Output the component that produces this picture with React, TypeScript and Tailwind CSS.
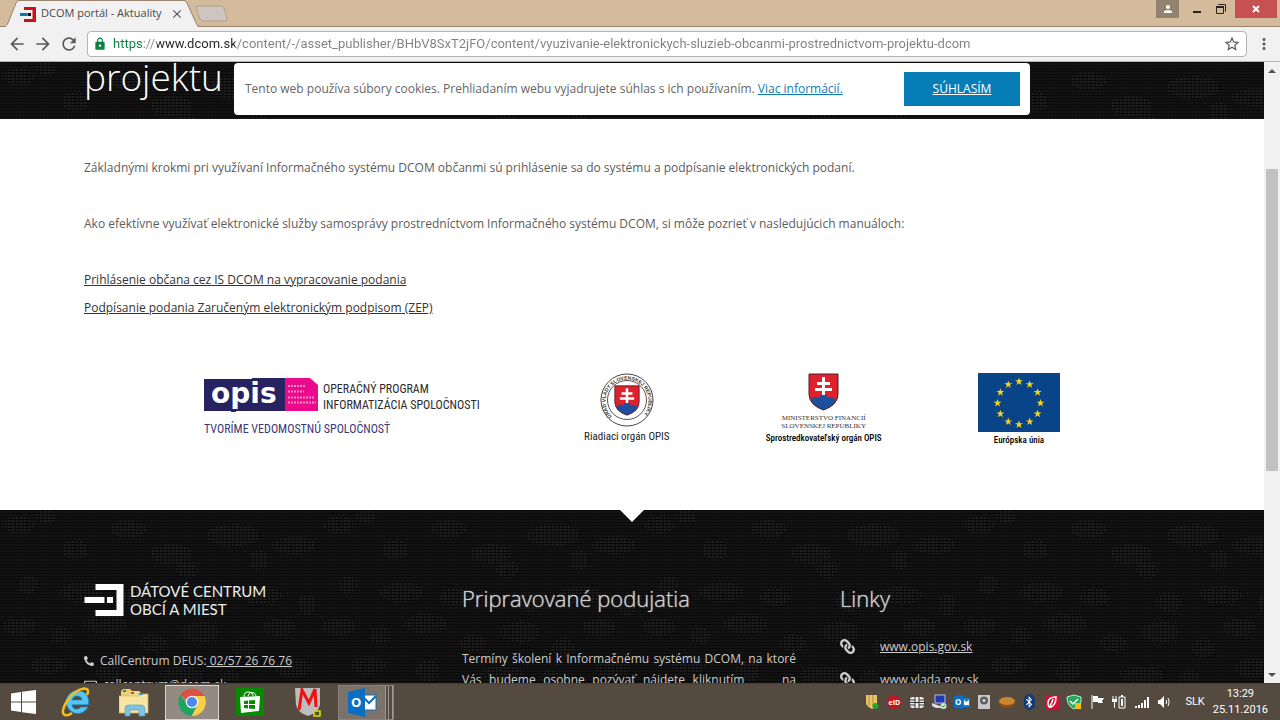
import type { ReactNode } from 'react';
import { FaBluetoothB, FaLink, FaPhone, FaRegEnvelope } from 'react-icons/fa';
import {
  MdArrowBack,
  MdArrowForward,
  MdClose,
  MdLock,
  MdMoreVert,
  MdPerson,
  MdRefresh,
  MdStarBorder,
} from 'react-icons/md';

const PAGE_URL =
  'https://www.dcom.sk/content/-/asset_publisher/BHbV8SxT2jFO/content/vyuzivanie-elektronickych-sluzieb-obcanmi-prostrednictvom-projektu-dcom';

// Lighter woven spots of the dark background: x, y, width, height
const PATCHES = [
  [4, 6, 30, 18], [36, 0, 20, 14], [62, 30, 26, 20], [110, 10, 36, 18], [150, 34, 42, 20],
  [176, 50, 22, 18], [206, 14, 54, 22], [250, 40, 18, 20], [272, 26, 44, 18], [18, 66, 20, 18],
  [60, 72, 44, 20], [120, 78, 30, 18], [196, 82, 26, 20], [240, 76, 42, 18], [298, 84, 18, 22],
  [2, 108, 34, 18], [50, 116, 20, 18], [84, 104, 44, 20], [140, 124, 26, 18], [180, 112, 40, 20],
  [232, 128, 22, 20], [262, 108, 34, 18], [30, 146, 36, 18], [96, 150, 24, 22], [160, 156, 44, 18],
  [220, 160, 20, 16], [276, 148, 34, 20],
];

function Weave({ id }: { id: string }) {
  return (
    <svg className="absolute inset-0 h-full w-full" aria-hidden="true">
      <defs>
        <pattern id={`${id}-grid`} width="3" height="3" patternUnits="userSpaceOnUse">
          <rect width="3" height="3" fill="#141414" />
          <rect width="1" height="3" fill="#101010" />
          <rect width="3" height="1" fill="#090909" />
        </pattern>
        <pattern id={`${id}-lines`} width="4" height="3" patternUnits="userSpaceOnUse">
          <rect y="1" width="2" height="2" fill="#1e1e1e" />
        </pattern>
        <pattern id={`${id}-spots`} width="320" height="176" patternUnits="userSpaceOnUse">
          {PATCHES.map(([x, y, w, h]) => (
            <ellipse
              key={`${x}-${y}`}
              cx={x + w / 2}
              cy={y + h / 2}
              rx={w / 2}
              ry={h / 2}
              fill={`url(#${id}-lines)`}
            />
          ))}
        </pattern>
      </defs>
      <rect width="100%" height="100%" fill={`url(#${id}-grid)`} />
      <rect width="100%" height="100%" fill={`url(#${id}-spots)`} />
    </svg>
  );
}

function DcomMark({ className }: { className: string }) {
  return (
    <svg viewBox="0 0 39 32" className={className} fill="#ffffff" aria-hidden="true">
      <path d="M11 0H39V32H11V26H32V6H11Z" />
      <path d="M0 13H20V19H0Z" />
      <path d="M22.500 13H28.500V19H22.500Z" />
    </svg>
  );
}

function BrowserChrome() {
  return (
    <header className="shrink-0 font-['Open_Sans',sans-serif]">
      <div className="flex h-[27px] border-b border-[#98846f] bg-[#d3bb9c]">
        <div className="relative h-[27px] w-[200px] shrink-0">
          <svg viewBox="0 0 200 27" className="absolute inset-0 h-full w-full" aria-hidden="true">
            <path d="M0 26.500H5Q7 26 8 23L16 3Q17 0.500 19 0.500H184Q186 0.500 187 3L196 23Q197 26.500 200 26.500V27H0Z" fill="#f1f1f1" stroke="#98846f" />
            <path d="M6 26.500H197" stroke="#f1f1f1" strokeWidth="2" />
          </svg>
          <div className="relative flex h-full items-center pl-5">
            <svg viewBox="0 0 16 16" className="h-4 w-4 shrink-0" aria-hidden="true">
              <path d="M4 1H16V16H4V13H12.500V4H4Z" fill="#cf1017" />
              <path d="M0 7H7V10H0Z" fill="#1273a8" />
              <path d="M7.500 7H11V10H7.500Z" fill="#111111" />
            </svg>
            <span className="ml-[5px] text-[11px] whitespace-nowrap text-[#4a4a4a]">DCOM portál - Aktuality</span>
            <button aria-label="Zavrieť kartu" className="mr-4 ml-auto text-[#555555]">
              <MdClose className="h-[14px] w-[14px]" />
            </button>
          </div>
        </div>
        <button aria-label="Nová karta" className="h-[22px] w-8 self-end">
          <svg viewBox="0 0 32 22" className="h-full w-full overflow-visible" aria-hidden="true">
            <path d="M-2 2H20Q23 2 24 4L27 14Q28 17 25 17H3Q1 17 0 15L-4 4Q-4 2 -2 2Z" fill="#cdc6c0" stroke="#b3a08c" />
          </svg>
        </button>
        <div className="ml-auto flex h-[18px] pr-[3px]">
          <button aria-label="Profil" className="flex w-[23px] items-center justify-center bg-[#938270] text-white">
            <MdPerson className="h-3 w-3" />
          </button>
          <button aria-label="Minimalizovať" className="flex w-[28px] items-end justify-center pb-[5px] pl-2">
            <span className="h-[2px] w-2 bg-[#222222]" />
          </button>
          <button aria-label="Obnoviť" className="flex w-[28px] items-center justify-center">
            <svg viewBox="0 0 12 12" className="h-3 w-3" fill="none" stroke="#2b2520" aria-hidden="true">
              <path d="M3.500 2V1.500H10.500V8.500H10" />
              <path d="M1.500 4.500H8.500V10.500H1.500Z" />
              <path d="M1 4H9" strokeWidth="2" />
            </svg>
          </button>
          <button aria-label="Zavrieť" className="flex w-[42px] items-center justify-center bg-[#c75050] text-white">
            <svg viewBox="0 0 8 8" className="h-2 w-2" aria-hidden="true">
              <path d="M1 1L7 7M7 1L1 7" stroke="#ffffff" strokeWidth="2" />
            </svg>
          </button>
        </div>
      </div>
      <div className="flex h-[35px] items-center border-b border-[#b6b4b6] bg-[#f1f1f1] px-[7px] text-[#5a5a5a]">
        <button aria-label="Späť" className="mr-[6px]"><MdArrowBack className="h-5 w-5" /></button>
        <button aria-label="Dopredu" className="mr-[6px]"><MdArrowForward className="h-5 w-5" /></button>
        <button aria-label="Obnoviť stránku" className="mr-2"><MdRefresh className="h-5 w-5" /></button>
        <div className="flex h-[26px] min-w-0 flex-1 items-center rounded-sm border border-[#b4b4b4] bg-white px-[5px]">
          <MdLock className="h-[14px] w-[14px] shrink-0 text-[#0b8043]" />
          <input
            type="text"
            aria-label="Adresa"
            defaultValue={PAGE_URL}
            className="ml-[6px] min-w-0 flex-1 bg-[linear-gradient(90deg,#0b8043_0_31px,#8a8a8a_31px_44px,#222222_44px_122px,#808080_122px)] bg-clip-text font-['Roboto',sans-serif] text-[13px] text-transparent outline-none"
          />
          <button aria-label="Pridať záložku"><MdStarBorder className="h-[18px] w-[18px]" /></button>
        </div>
        <button aria-label="Ponuka" className="ml-2"><MdMoreVert className="h-[18px] w-[18px]" /></button>
      </div>
    </header>
  );
}

function Shield({ x, y, w, h }: { x: number; y: number; w: number; h: number }) {
  return (
    <svg x={x} y={y} width={w} height={h} viewBox="0 0 31 38" preserveAspectRatio="none">
      <path d="M1 1H30V21Q30 32 15.500 37Q1 32 1 21Z" fill="#e0202b" />
      <path d="M3 28Q3 24 7 24Q10 24 11 25Q12 21 15.500 21Q19 21 20 25Q24 23 27 26Q28 27 28 28Q24 34 15.500 37Q7 34 3 28Z" fill="#1d4f9f" />
      <path d="M14 4H17V9H22V12H17V15H24V18H17V22H14V18H7V15H14V12H9V9H14Z" fill="#ffffff" />
      <path d="M1 1H30V21Q30 32 15.500 37Q1 32 1 21Z" fill="none" stroke="#4a2030" />
    </svg>
  );
}

function OpisLogo() {
  return (
    <div className="w-[283px] pt-1">
      <div className="flex items-center">
        <svg viewBox="0 0 114 34" className="h-[34px] w-[114px] shrink-0 overflow-visible" role="img" aria-label="opis">
          <path d="M0 1H48V0H81V33H32V34H27V33H0Z" fill="#272361" />
          <path d="M81 0H106L114 7V33H81Z" fill="#ec0a8c" />
          <text x="7" y="25" fontSize="28" fontWeight="700" fill="#ffffff" fontFamily="DejaVu Sans">opis</text>
          <path d="M84 8H102M84 13.500H100M84 19.500H110M84 24.500H112" stroke="#f68ac6" strokeWidth="2" strokeDasharray="2 1" />
        </svg>
        <p className="ml-[5px] pt-1 font-['Liberation_Sans_Narrow','Roboto_Condensed',sans-serif] text-[12px] leading-4 whitespace-nowrap text-[#2b2b2b]">
          OPERAČNÝ PROGRAM
          <br />
          INFORMATIZÁCIA SPOLOČNOSTI
        </p>
      </div>
      <p className="mt-2 font-['Liberation_Sans_Narrow','Roboto_Condensed',sans-serif] text-[12px] leading-4 whitespace-nowrap text-[#3c3878]">
        TVORÍME VEDOMOSTNÚ SPOLOČNOSŤ
      </p>
    </div>
  );
}

const STARS = Array.from({ length: 12 }, (_, i) => {
  const a = (i * Math.PI) / 6;
  return { x: 41 + 21.500 * Math.sin(a), y: 30 - 21.500 * Math.cos(a) };
});

function Partners() {
  return (
    <div className="flex h-[75px] justify-between px-[120px] font-['Liberation_Sans_Narrow','Roboto_Condensed',sans-serif] text-[#222222]">
      <OpisLogo />
      <div className="flex w-[85px] flex-col items-center">
        <svg viewBox="0 0 56 54" className="h-[54px] w-14 shrink-0 overflow-visible" role="img" aria-label="Úrad vlády">
          <defs>
            <path id="seal-ring" d="M13 43.500A21.500 21.500 0 1 1 43 43.500" />
          </defs>
          <circle cx="28" cy="27" r="26" fill="#ffffff" stroke="#444444" />
          <circle cx="28" cy="27" r="19.500" fill="none" stroke="#555555" />
          <text fontSize="5" fontWeight="700" fill="#333333" fontFamily="Liberation Sans">
            <textPath href="#seal-ring">ÚRAD VLÁDY SLOVENSKEJ REPUBLIKY</textPath>
          </text>
          <Shield x={15} y={12} w={26} h={31} />
        </svg>
        <span className="mt-[2px] text-[11px] leading-4 whitespace-nowrap">Riadiaci orgán OPIS</span>
      </div>
      <div className="flex w-[114px] flex-col items-center">
        <svg viewBox="0 0 31 38" className="h-[38px] w-[31px] shrink-0" role="img" aria-label="Štátny znak">
          <Shield x={0} y={0} w={31} h={38} />
        </svg>
        <p className="mt-[3px] text-center font-['Liberation_Serif',serif] text-[7px] leading-[8px] whitespace-nowrap text-[#333333]">
          MINISTERSTVO FINANCIÍ
          <br />
          SLOVENSKEJ REPUBLIKY
        </p>
        <span className="text-[9px] leading-4 font-medium whitespace-nowrap text-black">
          Sprostredkovateľský orgán OPIS
        </span>
      </div>
      <div className="flex w-[82px] flex-col items-center">
        <svg viewBox="0 0 82 59" className="h-[59px] w-[82px] shrink-0" role="img" aria-label="Vlajka EÚ">
          <rect width="82" height="59" fill="#094489" />
          {STARS.map((s) => (
            <path
              key={`${s.x}-${s.y}`}
              transform={`translate(${s.x} ${s.y})`}
              d="M0-4L1-1.200H4L1.500 0.500L2.500 3.500L0 1.700L-2.500 3.500L-1.500 0.500L-4-1.200H-1Z"
              fill="#f7d51d"
            />
          ))}
        </svg>
        <span className="text-[9px] leading-4 font-medium whitespace-nowrap text-black">Európska únia</span>
      </div>
    </div>
  );
}

function SiteFooter() {
  const heading = 'text-[22px] font-light leading-[30px] text-[#cccccc] [text-shadow:0_0_1px_#cccccc]';
  return (
    <footer className="relative min-h-0 flex-1 overflow-hidden bg-[#111111] px-[84px] pt-[73px] text-[#cccccc]">
      <Weave id="footer" />
      <svg viewBox="0 0 24 12" className="absolute top-0 left-1/2 h-3 w-6 -translate-x-1/2" aria-hidden="true">
        <path d="M0 0H24L12 12Z" fill="#ffffff" />
      </svg>
      <div className="relative grid max-w-[1090px] grid-cols-3 gap-[44px]">
        <div>
          <div className="flex h-[34px] items-center">
            <DcomMark className="h-8 w-10" />
            <p className="ml-[6px] font-['Lato',sans-serif] text-[15px] leading-[18px] whitespace-nowrap text-[#eeeeee]">
              DÁTOVÉ CENTRUM
              <br />
              OBCÍ A MIEST
            </p>
          </div>
          <ul className="mt-8 leading-6">
            <li className="flex items-center">
              <FaPhone className="mr-[6px] h-[10px] w-[10px] -scale-x-100" />
              <span>
                CallCentrum DEUS:<a href="tel:0257267676" className="underline"> 02/57 26 76 76</a>
              </span>
            </li>
            <li className="flex items-center">
              <FaRegEnvelope className="mr-[6px] h-[13px] w-[13px]" />
              <a href="mailto:callcentrum@dcom.sk">callcentrum@dcom.sk</a>
            </li>
          </ul>
        </div>
        <div>
          <h2 className={heading}>Pripravované podujatia</h2>
          <p className="mt-[35px] text-justify leading-[21px] [text-align-last:justify]">
            Termíny školení k Informačnému systému DCOM, na ktoré Vás budeme osobne pozývať nájdete kliknutím &nbsp; &nbsp; na
          </p>
        </div>
        <div>
          <h2 className={heading}>Linky</h2>
          <ul className="mt-[17px] leading-[33px]">
            {['www.opis.gov.sk', 'www.vlada.gov.sk'].map((site) => (
              <li key={site} className="flex items-center">
                <FaLink className="mr-[25px] h-[15px] w-[15px] -scale-x-100" />
                <a href={`http://${site}`} className="underline">{site}</a>
              </li>
            ))}
          </ul>
        </div>
      </div>
    </footer>
  );
}

function Page() {
  return (
    <main className="relative flex min-w-0 flex-1 flex-col overflow-hidden bg-white font-['Open_Sans',sans-serif] text-[12px]">
      <div className="relative flex h-[57px] shrink-0 items-end bg-[#111111] px-[84px]">
        <Weave id="hero" />
        <h1 className="relative pb-6 text-[37px] leading-none font-light text-white">projektu</h1>
      </div>
      <div
        role="dialog"
        aria-label="Cookies"
        className="absolute top-px left-1/2 flex h-[52px] w-[796px] -translate-x-1/2 items-center justify-between rounded bg-white pr-[10px] pl-[11px] text-[#666666]"
      >
        <p>
          Tento web používa súbory cookies. Prehliadaním webu vyjadrujete súhlas s ich používaním.{' '}
          <a href="#info" className="text-[#0f7bb5] underline">Viac informácií.</a>
        </p>
        <button className="h-[34px] w-[116px] bg-[#067db7] text-white underline">SÚHLASÍM</button>
      </div>
      <article className="shrink-0 px-[84px] pt-[35px] pb-[62px] leading-7 text-[#5c5c5c]">
        <p>
          Základnými krokmi pri využívaní Informačného systému DCOM občanmi sú prihlásenie sa do systému a podpísanie
          elektronických podaní.
        </p>
        <p className="mt-7">
          Ako efektívne využívať elektronické služby samosprávy prostredníctvom Informačného systému DCOM, si môže pozrieť
          v nasledujúcich manuáloch:
        </p>
        <ul className="mt-7 mb-[51px] text-[#333333]">
          <li><a href="#prihlasenie" className="underline">Prihlásenie občana cez IS DCOM na vypracovanie podania</a></li>
          <li><a href="#podpisanie" className="underline">Podpísanie podania Zaručeným elektronickým podpisom (ZEP)</a></li>
        </ul>
        <Partners />
      </article>
      <SiteFooter />
    </main>
  );
}

function Scrollbar() {
  return (
    <div className="flex w-4 shrink-0 flex-col bg-[#f1f1f1]">
      <button aria-label="Nahor" className="flex h-[17px] items-center justify-center">
        <svg viewBox="0 0 8 4" className="h-1 w-2" aria-hidden="true"><path d="M0 4L4 0L8 4Z" fill="#505050" /></svg>
      </button>
      <div className="min-h-0 flex-1 px-[2px] pt-[90px]">
        <div className="h-[302px] bg-[#c1c1c1]" />
      </div>
      <button aria-label="Nadol" className="flex h-[17px] items-center justify-center">
        <svg viewBox="0 0 8 4" className="h-1 w-2" aria-hidden="true"><path d="M0 0L4 4L8 0Z" fill="#505050" /></svg>
      </button>
    </div>
  );
}

function TaskButton({ label, children }: { label: string; children: ReactNode }) {
  return (
    <button aria-label={label} className="flex h-full w-[58px] items-center justify-center">
      {children}
    </button>
  );
}

function TrayIcon({ label, children }: { label: string; children: ReactNode }) {
  return (
    <svg viewBox="0 0 16 16" className="h-4 w-4" role="img" aria-label={label}>
      {children}
    </svg>
  );
}

function Taskbar() {
  return (
    <footer className="flex h-[37px] shrink-0 items-center border-t border-[#463e35] bg-[#544a40] font-['Roboto',sans-serif] text-white">
      <button aria-label="Štart" className="flex h-full w-[47px] items-center justify-center">
        <svg viewBox="0 0 25 24" className="h-6 w-[25px]" fill="#ffffff" aria-hidden="true">
          <path d="M0 3.500L10 2V11.500H0ZM11 1.800L25 0V11.500H11ZM0 12.500H10V22L0 20.500ZM11 12.500H25V24L11 22.200Z" />
        </svg>
      </button>
      <TaskButton label="Internet Explorer">
        <svg viewBox="0 0 30 30" className="h-[30px] w-[30px]" aria-hidden="true">
          <path d="M16 3.500A11.500 11.500 0 1 0 27 20H20Q18 22.500 15 22.300Q11.500 22 11 17.800H27.500Q29 4 16 3.500ZM11 13Q12 9 16 9Q20.500 9 21 13Z" fill="#55c6f4" stroke="#1d87c4" strokeWidth="0.700" />
          <path d="M26 8Q29 1.500 23 1.500Q13 3 6 14Q-1 26 4 28Q7 29 11 26" fill="none" stroke="#f4bd19" strokeWidth="2.500" />
        </svg>
      </TaskButton>
      <TaskButton label="Prieskumník">
        <svg viewBox="0 0 30 29" className="h-[29px] w-[30px]" aria-hidden="true">
          <path d="M2 3L4 1H11L13 3V8H2Z" fill="#e9cd78" />
          <path d="M10 5L12 3H20L22 5V9H10Z" fill="#efd88f" />
          <path d="M0 8H20L22 6H29V25H0Z" fill="#f8e5a2" stroke="#d7b960" strokeWidth="0.700" />
          <path d="M4 2H7V4H4Z" fill="#1aa01a" />
          <path d="M12 4H15V6H12Z" fill="#d34a2a" />
          <path d="M20 5H24V7H20Z" fill="#3f8dc9" />
          <path d="M6 28V21Q6 17 9 17H22Q26 17 26 21V28H20V22H11V28Z" fill="#7cc2e8" stroke="#4a9bcb" strokeWidth="0.600" />
        </svg>
      </TaskButton>
      <TaskButton label="Chrome">
        <span className="flex h-[35px] w-[54px] items-center justify-center border border-[#d9d5d0] bg-[#938b83]">
          <svg viewBox="0 0 28 28" className="h-7 w-7" aria-hidden="true">
            <path d="M14 14L2.200 7A14 14 0 0 1 26.500 8H14Z" fill="#dd5144" />
            <path d="M14 8H26.500A14 14 0 0 1 13.500 28L19.500 16Z" fill="#fccd48" />
            <path d="M2.200 7L9 17L19 17.500L13.500 28A14 14 0 0 1 2.200 7Z" fill="#1da362" />
            <circle cx="14" cy="14" r="6.300" fill="#f4f4f4" />
            <circle cx="14" cy="14" r="5" fill="#4a87ee" />
          </svg>
        </span>
      </TaskButton>
      <TaskButton label="Obchod">
        <svg viewBox="0 0 28 28" className="h-7 w-7" aria-hidden="true">
          <rect width="28" height="28" fill="#078a00" />
          <path d="M4 9L24 8L23 23L5 25Z" fill="#ffffff" />
          <path d="M8 9Q8 4 12 4Q17 4 17 8M12 8Q14 3 18 5Q20 6 20 8" fill="none" stroke="#ffffff" />
          <path d="M8 13L12 12.500V16H8ZM13 12.400L19 12V16H13ZM8 17H12V20.500L8 20ZM13 17H19V21L13 20.600Z" fill="#078a00" />
        </svg>
      </TaskButton>
      <TaskButton label="McAfee">
        <svg viewBox="0 0 26 30" className="h-[30px] w-[26px]" aria-hidden="true">
          <path d="M0 1H25V18Q23 26 13 29Q3 26 1 18Z" fill="#bdbdbd" />
          <path d="M4 23L7 3L14 16L20 2L21 20" fill="none" stroke="#ee1114" strokeWidth="3" />
          <path d="M19 24H25V29H19Z" fill="#55551a" stroke="#d6df1b" strokeWidth="1.500" />
        </svg>
      </TaskButton>
      <TaskButton label="Outlook">
        <span className="flex h-[35px] w-[56px] border border-[#8a8279] bg-[#7b7269]">
          <span className="flex flex-1 items-center justify-center">
            <svg viewBox="0 0 29 29" className="h-[29px] w-[29px]" aria-hidden="true">
              <path d="M13 7H28V22H13Z" fill="#ffffff" stroke="#0a6fc2" />
              <path d="M14 8L21 15L28 8" fill="none" stroke="#0a6fc2" strokeWidth="2" />
              <path d="M0 4L17 0V29L0 25Z" fill="#0a6fc2" />
              <text x="3" y="19" fontSize="13" fontWeight="700" fill="#ffffff" fontFamily="Open Sans">O</text>
            </svg>
          </span>
          <span className="w-1 border-x border-[#a09890] bg-[#544a40]" />
          <span className="w-1 border-r border-[#a09890] bg-[#544a40]" />
        </span>
      </TaskButton>

      <div className="ml-auto grid w-[315px] grid-cols-[repeat(14,minmax(0,1fr))] justify-items-center">
        <TrayIcon label="Ochrana">
          <path d="M2 1H13V9Q12 13 8 15Q2 12 2 9Z" fill="#e8c46a" />
          <path d="M5 1V12M9 1V13" stroke="#b78b35" />
          <circle cx="11.500" cy="12" r="3" fill="#22a52b" />
        </TrayIcon>
        <TrayIcon label="eID">
          <circle cx="8" cy="8" r="7" fill="#bd1925" />
          <text x="2.500" y="10.500" fontSize="7" fontWeight="700" fill="#ffffff" fontFamily="Open Sans">eID</text>
        </TrayIcon>
        <TrayIcon label="Čip">
          <rect x="1" y="3" width="14" height="11" rx="3" fill="#eeeeee" />
          <path d="M0 6H6M10 6H16M0 8.500H16M0 11H6M10 11H16M6 3V14M10 3V14" stroke="#333333" />
        </TrayIcon>
        <TrayIcon label="Sieťové disky">
          <path d="M4 1H14V9H4Z" fill="#2338b5" stroke="#b4bde0" />
          <path d="M1 9L9 12L15 14H5L1 12Z" fill="#d7dbe5" />
          <circle cx="12.500" cy="12" r="3" fill="#cfe6cf" />
          <path d="M11 12L12 13L14 11" fill="none" stroke="#22882b" />
        </TrayIcon>
        <TrayIcon label="Outlook">
          <path d="M0 2L9 1V15L0 14Z" fill="#0a6fc2" />
          <path d="M9 4H16V13H9Z" fill="#1a7fd2" />
          <path d="M10 6L12.500 8L15 6V11H10Z" fill="#ffffff" />
          <text x="1" y="11" fontSize="8" fontWeight="700" fill="#ffffff" fontFamily="Open Sans">O</text>
        </TrayIcon>
        <TrayIcon label="Reproduktor">
          <rect x="2" y="1" width="12" height="14" fill="#c9c9c9" />
          <circle cx="8" cy="6.500" r="4" fill="#5d5d5d" />
          <circle cx="8" cy="6.500" r="1.500" fill="#dddddd" />
        </TrayIcon>
        <TrayIcon label="Disk">
          <ellipse cx="8" cy="9" rx="8" ry="5" fill="#8e4b1e" />
          <ellipse cx="8" cy="7" rx="8" ry="4" fill="#c9862b" />
        </TrayIcon>
        <span className="flex h-4 w-[11px] items-center justify-center rounded-full bg-[#123a75]">
          <FaBluetoothB className="h-3 w-[10px]" />
        </span>
        <TrayIcon label="Aktualizácie">
          <rect x="1" y="1" width="14" height="14" fill="#d01036" />
          <path d="M12 3Q4 3 4 9Q4 14 7 13Q12 11 12 3ZM9 5Q8 9 6 12" fill="none" stroke="#ffffff" strokeWidth="1.500" />
        </TrayIcon>
        <TrayIcon label="Zabezpečenie">
          <path d="M8 1L15 3V8Q14 13 8 15Q1 12 1 3Z" fill="#22a857" stroke="#c8e8d0" />
          <path d="M4 7L7 10L12 5" fill="none" stroke="#ffffff" strokeWidth="1.500" />
          <rect x="9" y="9" width="6" height="6" fill="#f4bd19" />
        </TrayIcon>
        <TrayIcon label="Centrum akcií">
          <path d="M3 1V15" stroke="#ffffff" />
          <path d="M4 2H9V4H15L13 7L14 9H9V8H4Z" fill="#ffffff" />
        </TrayIcon>
        <TrayIcon label="Batéria">
          <path d="M8 3H14V14H8Z" fill="none" stroke="#ffffff" />
          <path d="M10 1H12V3H10ZM10 5H12V12H10Z" fill="#ffffff" />
          <path d="M2 2V5M5 2V5" stroke="#ffffff" />
          <path d="M1 5H6V8H4V14H3V8H1Z" fill="#ffffff" />
        </TrayIcon>
        <TrayIcon label="Sieť">
          <path d="M1 12H3V14H1ZM4 11H6V14H4ZM7 9H9V14H7ZM10 6H12V14H10ZM13 3H15V14H13Z" fill="#ffffff" />
        </TrayIcon>
        <TrayIcon label="Hlasitosť">
          <path d="M2 6H4L8 2V14L4 10H2Z" fill="#ffffff" />
          <path d="M10 6Q11.500 8 10 10M12 4Q14.500 8 12 12" fill="none" stroke="#ffffff" />
        </TrayIcon>
      </div>
      <span className="mr-2 ml-[10px] text-[11px]">SLK</span>
      <div className="mr-3 text-center text-[11px] leading-4">
        <div>13:29</div>
        <div>25.11.2016</div>
      </div>
    </footer>
  );
}

export default function App() {
  return (
    <div className="flex h-screen flex-col overflow-hidden">
      <BrowserChrome />
      <div className="flex min-h-0 flex-1">
        <Page />
        <Scrollbar />
      </div>
      <Taskbar />
    </div>
  );
}
